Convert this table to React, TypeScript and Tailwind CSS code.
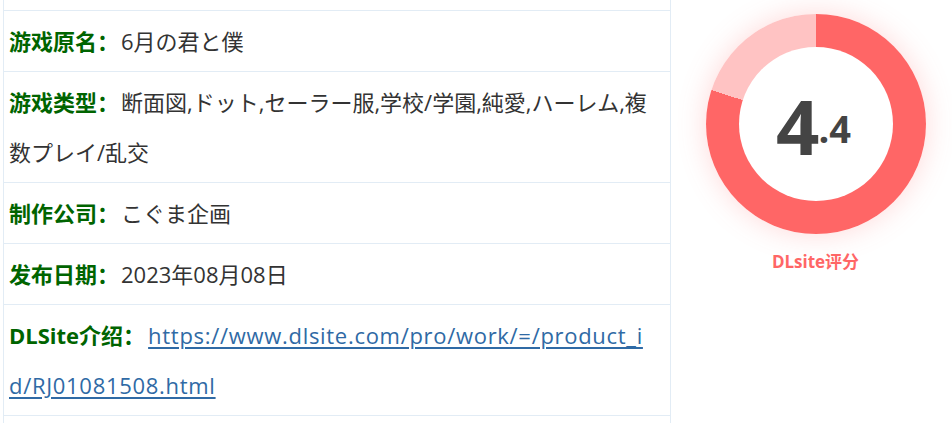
const rows = [
  { label: '游戏原名', value: '6月の君と僕' },
  { label: '游戏类型', value: '断面図,ドット,セーラー服,学校/学園,純愛,ハーレム,複数プレイ/乱交' },
  { label: '制作公司', value: 'こぐま企画' },
  { label: '发布日期', value: '2023年08月08日' },
  {
    label: 'DLSite介绍',
    value: 'https://www.dlsite.com/pro/work/=/product_id/RJ01081508.html',
    href: 'https://www.dlsite.com/pro/work/=/product_id/RJ01081508.html',
  },
];

function ScoreRing() {
  return (
    <div className="flex flex-col items-center pt-[14px]">
      <div className="w-[220px] h-[220px] rounded-full bg-[conic-gradient(#ff6666_0deg_288deg,#ffc3c3_288deg_360deg)] shadow-[0_0_28px_rgba(255,102,102,0.25)] flex items-center justify-center">
        <div className="w-[154px] h-[154px] rounded-full bg-white flex items-center justify-center">
          <p className="font-['Open_Sans','Liberation_Sans',sans-serif] font-bold text-[#444] leading-none whitespace-nowrap pt-[4px] pr-[4px]">
            <span className="text-[76px] tracking-[-1px]">4</span>
            <span className="text-[38px] align-[12px]">.4</span>
          </p>
        </div>
      </div>
      <p className="mt-[15px] text-[17px] font-bold text-[#ff6666] font-['Open_Sans','Noto_Sans_CJK_SC',sans-serif]">
        DLsite评分
      </p>
    </div>
  );
}

export default function App() {
  return (
    <div className="w-[952px] h-[423px] overflow-hidden bg-white flex font-['Open_Sans','Noto_Sans_CJK_SC',sans-serif]">
      <div className="ml-[3px] w-[668px] shrink-0 border-x border-[#e2ecf5] pt-[10px]">
        {rows.map((row) => (
          <div
            key={row.label}
            className={`border-t border-[#e2ecf5] pl-[5px] py-[5px] text-[22px] leading-[50px] text-[#333] break-all ${
              row.href ? 'pr-[22px]' : 'pr-[5px]'
            }`}
          >
            <span className="font-bold text-[#006400]">{row.label}：</span>
            {row.href ? (
              <a
                href={row.href}
                className="ml-[3px] text-[#2f6aa5] underline underline-offset-[3px] tracking-[0.7px]"
              >
                {row.value}
              </a>
            ) : (
              <span className="ml-[2px]">{row.value}</span>
            )}
          </div>
        ))}
        <div className="border-t border-[#e2ecf5] h-[20px]" />
      </div>
      <div className="flex-1 flex justify-center pl-[8px]">
        <ScoreRing />
      </div>
    </div>
  );
}
